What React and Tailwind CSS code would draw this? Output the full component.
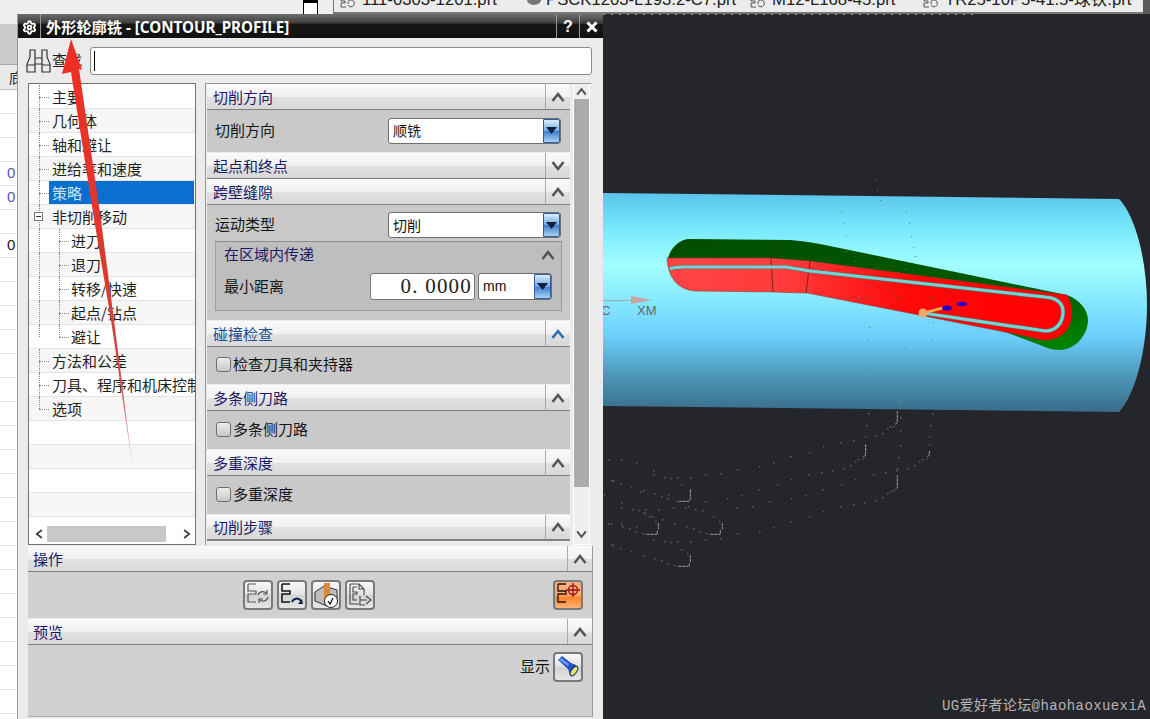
import { Settings } from "lucide-react";

const cjk = "font-['Noto_Sans_CJK_SC',sans-serif]";
const headerBg = "bg-[linear-gradient(#fafafa_0%,#f1f1f1_50%,#e2e2e2_51%,#d8d8d8_100%)]";

const treeRows = [
  { label: "主要", tick: 1 },
  { label: "几何体", tick: 1 },
  { label: "轴和避让", tick: 1 },
  { label: "进给率和速度", tick: 1 },
  { label: "策略", tick: 1, selected: true },
  { label: "非切削移动", expand: true },
  { label: "进刀", child: true },
  { label: "退刀", child: true },
  { label: "转移/快速", child: true },
  { label: "起点/钻点", child: true },
  { label: "避让", child: true, last: true },
  { label: "方法和公差", tick: 1 },
  { label: "刀具、程序和机床控制", tick: 1 },
  { label: "选项", tick: 1, end: true },
  {},
  {},
  {},
  {}
];

// sheet rows peeking out left of the dialog
const sheetRows = ["", "", "", "0", "0", "", "0", "", "", "", "", "", "", "", "", "", "", "", "", "", "", "", "", "", "", "", ""];

const tabs = [
  { name: "111-0303-1201.prt", w: "w-[187px]" },
  { name: "PSCK1203-L193.2-C7.prt", w: "w-[223px]", part: true },
  { name: "M12-L168-45.prt", w: "w-[173px]" },
  { name: "TR25-10P5-41.5-球铁.prt", w: "w-[210px]" }
];

// toolpath dots below the cylinder, in page coordinates / 3 offset
const dots = [
  [55,178],[94,178],[139,187],[190,211],[190,223],[223,232],[241,235],[262,232],[301,232],[346,223],[391,220],[442,208],[508,199],[550,187],[601,169],[658,157],[700,139],[751,127],[790,121],[835,40],[829,76],[856,106],[877,100],[892,85],[901,79],[910,79],[931,7],[931,52],[931,91],[931,136],[925,172],[1027,40],[1021,76],[1018,109],[1018,133],[1009,175],[997,178],[988,184],[973,196],[952,205],[922,205],[919,211],[886,217],[850,223],[796,238],[754,253],[727,211],[694,217],[655,223],[604,238],[562,253],[505,268],[454,286],[412,295],[346,304],[301,268],[274,253],[235,283],[214,289],[232,295],[193,280],[160,271],[151,274],[124,262],[91,250],[70,241],[64,241],[43,283],[94,307],[94,322],[127,328],[145,331],[166,328],[205,328],[250,322],[286,322],[295,319],[316,328],[337,331],[370,349],[388,364],[439,322],[487,319],[538,304],[604,295],[646,286],[697,268],[751,319],[790,313],[823,307],[856,301],[877,292],[892,280],[901,274],[910,271],[700,334],[658,349],[601,364],[550,382],[508,394],[442,400],[391,415],[346,418],[301,424],[262,424],[241,427],[223,424],[190,418],[157,400],[136,394],[118,385],[97,379],[94,370],[64,370],[55,370],[139,379],[160,337],[166,340],[178,349],[187,349],[196,364],[217,358],[253,370],[289,379],[310,385],[328,394],[349,400],[64,433],[70,436],[91,445],[124,454],[160,466],[193,475],[214,481],[232,490],[253,496],[274,448],[292,460],[826,109],[781,196],[760,205],[805,178],[796,184],[817,175]
];

const paths = [
  "M301 270V298L297 304H262", "M205 370V388M202 392V403H166", "M397 370V388M391 391V403H358",
  "M301 466V486M298 490V499H262", "M827 133V166L820 170", "M1018 153V166L1012 170",
  "M922 226V262L915 268", "M922 34V68L915 73"
];

const faintDots = [
  [875,180],[877,190],[880,200],[841,212],[843,223],[846,235],[906,212],[909,223],[911,236],[913,247],[915,256],[846,251],[855,261],[870,275],[898,272],[905,269],[858,298],[870,285],[890,289],[900,297],[868,297],[869,327],[868,340],[869,370],[868,391],[932,297],[933,322],[932,340],[933,358],[932,391],[905,347],[905,372],[905,395]
];

function Chevron({ dir = "up", className = "text-[#4d4d4d]", size = 14 }) {
  return (
    <svg width={size} height={size} viewBox="0 0 14 14" className={className}>
      <path d={dir === "up" ? "M1.5 11 7 4l5.5 7" : "M1.5 3 7 10l5.5-7"} fill="none" stroke="currentColor" strokeWidth="2.6" />
    </svg>
  );
}

function SectionHeader({ title, open = true, blue = false, pad = "pl-[6px]", className = "" }) {
  return (
    <div className={`flex h-[26px] shrink-0 items-center border-b border-[#808080] ${headerBg} ${className}`}>
      <span className={`flex-1 pb-px text-[15px] leading-none ${pad} ${blue ? "text-[#1c4e96]" : "text-[#1b1b66]"} ${cjk}`}>{title}</span>
      <div className="flex h-full w-[25px] items-center justify-center border-l border-[#aaaaaa] border-b-0">
        <Chevron dir={open ? "up" : "down"} className={blue ? "text-[#2d6fae]" : "text-[#555555]"} />
      </div>
    </div>
  );
}

function Combo({ value, className = "", mono = false }) {
  return (
    <div className={`flex items-stretch rounded-[3px] border border-[#6f6f6f] bg-white ${className}`}>
      <span className={`flex flex-1 items-center pl-[4px] text-[14px] text-[#111111] ${mono ? "font-['Liberation_Sans',sans-serif]" : cjk}`}>{value}</span>
      <div className="flex w-[17px] items-center justify-center rounded-r-[2px] border border-[#2f5f9f] bg-[linear-gradient(#dcecfa_0%,#6fa8e0_50%,#3f7fcb_52%,#a9d0f2_100%)]">
        <svg width="11" height="7" viewBox="0 0 11 7"><path d="M0 0h11L5.5 7z" fill="#10203f" /></svg>
      </div>
    </div>
  );
}

function Check({ label }) {
  return (
    <div className="flex h-full items-center pb-[2px] pl-[9px]">
      <span className="h-[15px] w-[15px] rounded-[3px] border border-[#6e6e6e] bg-[linear-gradient(#ededed,#c8c8c8)]" />
      <span className={`ml-[2px] text-[15px] text-[#151515] ${cjk}`}>{label}</span>
    </div>
  );
}

function ToolButton({ children, orange = false }) {
  return (
    <div className={`flex h-[30px] w-[30px] shrink-0 items-center justify-center rounded-[4px] border-2 border-[#7a7a7a] ${orange ? "bg-[linear-gradient(#f6b183_0%,#f6a872_50%,#f8862c_62%,#fbb478_100%)]" : "bg-[linear-gradient(#f7f7f7,#e2e2e2_50%,#d2d2d2_52%,#e6e6e6)]"}`}>
      {children}
    </div>
  );
}

const flowPath = "M3 2h8M3 2v7h8v3H3v8h8";

function Binoculars() {
  return (
    <svg width="25" height="24" viewBox="0 0 25 24" fill="none" stroke="#333333" strokeWidth="1.2">
      <path d="M1 23v-8L4 8V1h5v22zM1 16h8M24 23v-8L21 8V1h-5v22zM24 16h-8M9 9h7M9 15h7" />
    </svg>
  );
}

function Viewport() {
  return (
    <svg className="h-full w-full" viewBox="603 14 547 705">
      <defs>
        <linearGradient id="cyl" x1="0" y1="0" x2="0" y2="1">
          <stop offset="0" stopColor="#5ac4ec" />
          <stop offset="0.16" stopColor="#78e8fb" />
          <stop offset="0.33" stopColor="#a2ffff" />
          <stop offset="0.5" stopColor="#84e8ff" />
          <stop offset="0.66" stopColor="#6bcdfc" />
          <stop offset="0.82" stopColor="#4f9bbd" />
          <stop offset="1" stopColor="#396c8a" />
        </linearGradient>
        <linearGradient id="face" x1="0" y1="0" x2="1" y2="0">
          <stop offset="0" stopColor="#ff4444" />
          <stop offset="0.3" stopColor="#ff3a3a" />
          <stop offset="0.6" stopColor="#ff0808" />
          <stop offset="1" stopColor="#ff0000" />
        </linearGradient>
        <linearGradient id="wall" x1="0" y1="0" x2="1" y2="1">
          <stop offset="0" stopColor="#014d01" />
          <stop offset="0.7" stopColor="#025b02" />
          <stop offset="1" stopColor="#008a00" />
        </linearGradient>
      </defs>
      <path d="M603 193L1119 199C1135 215 1147 260 1147 305C1147 350 1135 395 1119 412L603 406Z" fill="url(#cyl)" />
      <path d="M667 262C669 250 678 239 690 239L790 240Q805 241 825 245L1067 295C1080 300 1088 310 1088 320C1088 335 1075 350 1060 350Q1050 350 1040 345L1000 330L700 270Z" fill="url(#wall)" />
      <path d="M667 258L771 258L810 261L1067 295C1072 303 1072 313 1072 313C1072 330 1060 340 1045 340C1040 340 1035 338 1020 335L807 293Q800 293 772 292L695 291C680 290 668 280 667 258Z" fill="url(#face)" stroke="#7a3a3a" strokeWidth="0.5" />
      <path d="M771 258L773 292M810 261L806 293" stroke="#5a1a1a" strokeWidth="0.8" fill="none" />
      <path d="M683 241L670 258M783 241L771 258M824 245L810 261" stroke="#0b3b0b" strokeWidth="0.6" fill="none" />
      <path d="M670 269Q674 267 684 267L786 267L810 271L1045 297C1058 298 1063 304 1063 312C1063 323 1056 331 1045 331L923 313" fill="none" stroke="#666666" strokeWidth="4.2" />
      <path d="M670 269Q674 267 684 267L786 267L810 271L1045 297C1058 298 1063 304 1063 312C1063 323 1056 331 1045 331L923 313" fill="none" stroke="#72d4d4" strokeWidth="3.2" />
      <path d="M923 313L947 307" stroke="#ffb347" strokeWidth="2.6" />
      <circle cx="923" cy="313" r="4.5" fill="#f2a56f" />
      <ellipse cx="947" cy="308" rx="5" ry="2.6" fill="#2200cc" />
      <ellipse cx="962" cy="304" rx="5" ry="2.2" fill="#2200cc" />
      <path d="M603 300.5H632" stroke="#aaaaaa" strokeWidth="1" />
      <path d="M631 296L652 300L631 304Z" fill="#c9a3a3" />
      <text x="637" y="315" fontSize="13" fill="#666666" fontFamily="Liberation Sans">XM</text>
      <text x="601" y="315" fontSize="13" fill="#666666" fontFamily="Liberation Sans">C</text>
      <path d="M603 14.5H975" stroke="#8a8a8a" strokeWidth="1" strokeDasharray="2 6" />
      {faintDots.map(([x, y]) => (
        <rect key={`${x}-${y}`} x={x} y={y} width="1" height="1" fill="#5a7a8a" />
      ))}
      <g transform="translate(590 400) scale(0.3333)">
        {dots.map(([x, y], i) => (
          <rect key={i} x={x} y={y} width="3" height="3" fill="#a8a8a8" />
        ))}
        {paths.map((d) => (
          <path key={d} d={d} stroke="#a0a0a0" strokeWidth="3" strokeDasharray="9 2" fill="none" />
        ))}
      </g>
    </svg>
  );
}

export default function App() {
  return (
    <div className={`relative flex h-[719px] w-[1150px] flex-col overflow-hidden bg-[#25262b] ${cjk}`}>
      {/* top strip with part tabs */}
      <div className="flex h-[14px] shrink-0 bg-[#efefef]">
        <div className="w-[303px]" />
        <div className="h-[14px] w-[15px] border-x border-black bg-white">
          <div className="h-[3px] bg-black" />
        </div>
        <div className="w-[15px]" />
        <div className="flex w-[810px] overflow-hidden border-b-2 border-l border-[#777777] bg-[#ececec] pl-[5px]">
          {tabs.map((t) => (
            <div key={t.name} className={`flex shrink-0 items-center ${t.w}`}>
              {t.part ? (
                <svg width="17" height="12" viewBox="0 0 17 12" className="mr-[3px] -mt-[8px] shrink-0"><ellipse cx="8" cy="4" rx="7" ry="5" fill="#777777" /></svg>
              ) : (
                <svg width="17" height="12" viewBox="0 0 17 12" className="mr-[6px] -mt-[8px] shrink-0"><path d="M2 1h5M2 1v4h4v2H2v4h5M9 8a3 3 0 0 1 6-2M15 6a3 3 0 0 1-6 3" fill="none" stroke="#555555" /></svg>
              )}
              <span className="-mt-[11px] whitespace-nowrap font-['Liberation_Sans','Noto_Sans_CJK_SC',sans-serif] text-[16.7px] leading-none text-[#222222]">{t.name}</span>
            </div>
          ))}
        </div>
        <div className="flex-1 bg-[#5a5a5a]" />
      </div>

      <div className="flex min-h-0 flex-1">
        {/* spreadsheet behind the dialog */}
        <div className="flex w-[17px] shrink-0 flex-col overflow-hidden bg-white">
          <div className="h-[10px] shrink-0 bg-[#efefef]" />
          <div className="h-[41px] shrink-0 border-b border-[#aaaaaa] bg-[#cbcbcb]" />
          <div className="flex h-[25px] shrink-0 items-center overflow-hidden border-b border-[#bdbdbd] bg-[#e9e9e9] pl-[9px] text-[14px] leading-none text-[#222222]">
            <span className="whitespace-nowrap">底</span>
          </div>
          {sheetRows.map((v, i) => (
            <div
              key={i}
              className={`flex h-[24px] shrink-0 items-center border-b border-[#e2e2e2] pl-[7px] font-['Liberation_Sans',sans-serif] text-[15px] ${i === 6 ? "text-[#222222]" : "text-[#5a55c0]"}`}
            >
              {v}
            </div>
          ))}
        </div>

        {/* operation dialog */}
        <div className="flex w-[586px] shrink-0 flex-col border-l border-[#9a9a9a] bg-[#ebebeb]">
          <div className="flex h-[24px] shrink-0 items-center bg-[linear-gradient(#6e6e6e_0%,#3d3d3d_38%,#171717_42%,#111111_100%)]">
            <div className="flex h-full w-[23px] items-center justify-center border-r border-[#999999] pt-[2px]">
              <Settings size={15} className="text-white" strokeWidth={3} />
            </div>
            <span className="ml-[5px] mt-[3px] flex-1 whitespace-nowrap font-['Noto_Sans','Noto_Sans_CJK_SC',sans-serif] text-[15.2px] font-bold leading-none text-white">
              外形轮廓铣 - [CONTOUR_PROFILE]
            </span>
            <div className="flex h-full w-[23px] items-center justify-center border-l border-[#999999] pt-[2px] font-['Liberation_Sans',sans-serif] text-[16px] font-bold text-white">?</div>
            <div className="flex h-full w-[24px] items-center justify-center border-l border-[#999999] pt-[2px]">
              <svg width="12" height="12" viewBox="0 0 12 12"><path d="M1.5 1.5l9 9M10.500 1.500l-9 9" stroke="#ffffff" strokeWidth="3" /></svg>
            </div>
          </div>

          <div className="flex h-[45px] shrink-0 items-center pl-[8px] pr-[11px]">
            <Binoculars />
            <span className="ml-[1px] w-[38px] shrink-0 text-[15px] text-[#1a1a1a]">查找</span>
            <div className="flex h-[28px] flex-1 items-center rounded-[3px] border border-[#8a8a8a] bg-white pl-[3px]">
              <span className="h-[20px] w-px bg-black" />
            </div>
          </div>

          <div className="flex h-[462px] shrink-0 pl-[10px]">
            {/* tree */}
            <div className="flex w-[168px] shrink-0 flex-col overflow-hidden border border-[#707070] bg-white">
              <div className="min-h-0 flex-1 overflow-hidden pt-px">
                {treeRows.map((r, i) => (
                  <div key={i} className={`relative flex h-[24px] items-center border-b border-[#e4e4e4] ${i % 2 ? "bg-[#f6f6f6]" : "bg-white"}`}>
                    {r.label && !r.last && !r.end && <span className="absolute left-[10px] top-0 h-[24px] border-l border-dotted border-[#888888]" />}
                    {(r.last || r.end) && <span className="absolute left-[10px] top-0 h-[12px] border-l border-dotted border-[#888888]" />}
                    {r.tick && <span className="absolute left-[10px] top-[12px] w-[10px] border-t border-dotted border-[#888888]" />}
                    {r.child && <span className="absolute left-[30px] top-0 h-[12px] border-l border-dotted border-[#888888]" />}
                    {r.child && !r.last && <span className="absolute left-[30px] top-[12px] h-[12px] border-l border-dotted border-[#888888]" />}
                    {r.child && <span className="absolute left-[30px] top-[12px] w-[10px] border-t border-dotted border-[#888888]" />}
                    {r.expand && (
                      <span className="absolute left-[5px] top-[7px] flex h-[9px] w-[9px] items-center justify-center border border-[#777777] bg-white">
                        <span className="h-px w-[5px] bg-[#333333]" />
                      </span>
                    )}
                    {r.selected && <span className="absolute bottom-0 left-[20px] right-px top-0 bg-[#0a6fce]" />}
                    {r.label && (
                      <span className={`relative whitespace-nowrap text-[15px] leading-none ${r.child ? "ml-[42px]" : "ml-[23px]"} ${r.selected ? "text-[#cfe4f7]" : "text-[#1f1f1f]"}`}>
                        {r.label}
                      </span>
                    )}
                  </div>
                ))}
              </div>
              <div className="flex h-[20px] shrink-0 items-center bg-white">
                <Chevron dir="up" className="ml-[5px] -rotate-90 text-[#444444]" size={10} />
                <div className="ml-[3px] h-[16px] w-[119px] bg-[#c8c8c8]" />
                <div className="flex-1" />
                <Chevron dir="up" className="mr-[3px] rotate-90 text-[#444444]" size={10} />
              </div>
            </div>

            {/* option sections */}
            <div className="ml-[9px] flex w-[386px] shrink-0 overflow-hidden border-t border-l border-[#9a9a9a]">
              <div className="flex w-[364px] shrink-0 flex-col gap-px overflow-hidden pl-px">
                <div>
                  <SectionHeader title="切削方向" />
                  <div className="flex h-[42px] items-center justify-between bg-[#c9c9c9] pb-px pl-[8px] pr-[9px]">
                    <span className="text-[15px] text-[#151515]">切削方向</span>
                    <Combo value="顺铣" className="h-[26px] w-[173px]" />
                  </div>
                </div>
                <div>
                  <SectionHeader title="起点和终点" open={false} />
                  <SectionHeader title="跨壁缝隙" />
                  <div className="flex h-[115px] flex-col bg-[#c9c9c9] px-[8px] pt-[7px]">
                    <div className="flex items-center justify-between pr-px">
                      <span className="pb-[1px] text-[15px] text-[#151515]">运动类型</span>
                      <Combo value="切削" className="h-[26px] w-[173px]" />
                    </div>
                    <div className="mt-[3px] h-[70px] border border-[#9e9e9e] border-t-[#8d8d8d] bg-[#bebebe] pl-[8px] pr-[9px]">
                      <div className="flex h-[25px] items-center justify-between">
                        <span className="pb-[1px] text-[15px] text-[#1b1b66]">在区域内传递</span>
                        <Chevron className="mr-[-3px] text-[#555555]" />
                      </div>
                      <div className="mt-[6px] flex items-center">
                        <span className="flex-1 pb-[1px] text-[15px] text-[#151515]">最小距离</span>
                        <div className="flex h-[27px] w-[105px] items-center justify-end rounded-[3px] border border-[#777777] bg-white pr-[2px] font-['Liberation_Serif',serif] text-[21px] tracking-[1.2px] text-[#222222]">
                          0. 0000
                        </div>
                        <Combo mono value="mm" className="ml-[3px] h-[27px] w-[74px]" />
                      </div>
                    </div>
                  </div>
                </div>
                <div>
                  <SectionHeader title="碰撞检查" blue />
                  <div className="h-[37px] bg-[#c9c9c9]"><Check label="检查刀具和夹持器" /></div>
                </div>
                <div>
                  <SectionHeader title="多条侧刀路" />
                  <div className="h-[38px] bg-[#c9c9c9]"><Check label="多条侧刀路" /></div>
                </div>
                <div>
                  <SectionHeader title="多重深度" />
                  <div className="h-[38px] bg-[#c9c9c9]"><Check label="多重深度" /></div>
                </div>
                <SectionHeader title="切削步骤" className="border-b-2" />
              </div>
              <div className="ml-[3px] flex w-[17px] shrink-0 flex-col items-center border-x border-b border-white bg-[#efefef]">
                <Chevron className="my-[2px] text-[#555555]" size={11} />
                <div className="h-[388px] w-full bg-[#ababab]" />
                <div className="flex-1" />
                <Chevron dir="down" className="mb-[4px] text-[#555555]" size={11} />
              </div>
            </div>
          </div>

          {/* actions and preview */}
          <div className="ml-[10px] mt-[1px] flex w-[565px] flex-col border-r border-[#999999]">
            <SectionHeader title="操作" pad="pl-[5px]" />
            <div className="flex h-[46px] items-center gap-[4px] bg-[#d1d1d1] pl-[215px]">
              <ToolButton>
                <svg width="26" height="26" viewBox="0 0 26 26" fill="none" stroke="#555555" strokeWidth="1.200"><path d={flowPath} /><path d="M13 13a5 5 0 0 1 9-1M23 15a5 5 0 0 1-9 2M22 8v4h-4M14 21v-4h4" /></svg>
              </ToolButton>
              <ToolButton>
                <svg width="26" height="26" viewBox="0 0 26 26" fill="none" stroke="#111111" strokeWidth="1.500"><path d={flowPath} /><path d="M13 20a5 5 0 0 1 9-1" strokeWidth="2" stroke="#102040" /><path d="M24 22h-5l4-5z" fill="#102040" stroke="none" /></svg>
              </ToolButton>
              <ToolButton>
                <svg width="26" height="26" viewBox="0 0 26 26"><path d="M2 10l9-6 13 4v9l-10 7-12-5z" fill="#bdbdbd" stroke="#333333" /><path d="M11 1h6v16l-3 3-3-3z" fill="#d88a3c" /><circle cx="18" cy="19" r="6.500" fill="#ffffff" stroke="#222222" /><path d="M15 19l2 3 3-6" fill="none" stroke="#111111" strokeWidth="1.300" /></svg>
              </ToolButton>
              <ToolButton>
                <svg width="26" height="26" viewBox="0 0 26 26" fill="none" stroke="#444444" strokeWidth="1.100"><path d="M3 2h9l5 5v6M3 2v20h9" /><path d="M6 5h4M6 5v5h4v2H6v6h4" /><path d="M12 2v5h5M13 14v9h5M13 18h7M19 14l5 4-5 4" /></svg>
              </ToolButton>
              <div className="flex-1" />
              <div className="mr-[9px]">
                <ToolButton orange>
                  <svg width="26" height="26" viewBox="0 0 26 26" fill="none" stroke="#2a1408" strokeWidth="1.300"><path d={flowPath} /><circle cx="18" cy="8" r="4.500" stroke="#a01010" /><path d="M18 1v14M11 8h14" stroke="#a01010" /></svg>
                </ToolButton>
              </div>
            </div>
            <SectionHeader title="预览" pad="pl-[5px]" className="mt-px" />
            <div className="flex h-[72px] items-start justify-end border-b border-[#aaaaaa] bg-[#d1d1d1] pr-[9px] pt-[7px]">
              <span className="mr-[3px] mt-[3px] text-[15px] text-[#151515]">显示</span>
              <ToolButton>
                <svg width="26" height="26" viewBox="0 0 26 26">
                  <path d="M3 6L7 2L16 9L21 11L15 21L13 15Z" fill="#1f55c8" />
                  <path d="M6 4L14 10L13 12L4 6Z" fill="#6f9cf0" />
                  <ellipse cx="19" cy="17" rx="2.600" ry="5.500" transform="rotate(35 19 17)" fill="#e8e36a" stroke="#0f2f78" />
                </svg>
              </ToolButton>
            </div>
          </div>
        </div>

        <div className="min-w-0 flex-1">
          <Viewport />
        </div>
      </div>

      <span className="absolute left-[942px] top-[699px] whitespace-nowrap font-['Liberation_Mono','Noto_Sans_CJK_SC',monospace] text-[14px] leading-none tracking-[0.4px] text-[#b5b5b5]">
        UG爱好者论坛@haohaoxuexiA
      </span>

      {/* red annotation arrow */}
      <svg className="pointer-events-none absolute left-0 top-0" width="200" height="480" viewBox="0 0 200 480">
        <defs>
          <linearGradient id="arrow" x1="0" y1="0" x2="0" y2="1">
            <stop offset="0" stopColor="#ee2e24" />
            <stop offset="0.55" stopColor="#dc3a30" />
            <stop offset="0.8" stopColor="#c85050" />
            <stop offset="1" stopColor="#f0d0d0" />
          </linearGradient>
        </defs>
        <polygon points="71,39 82,70 79,69 100,213 114,320 133,470 111,320 93,213 71,72 62,74" fill="url(#arrow)" />
      </svg>
    </div>
  );
}
